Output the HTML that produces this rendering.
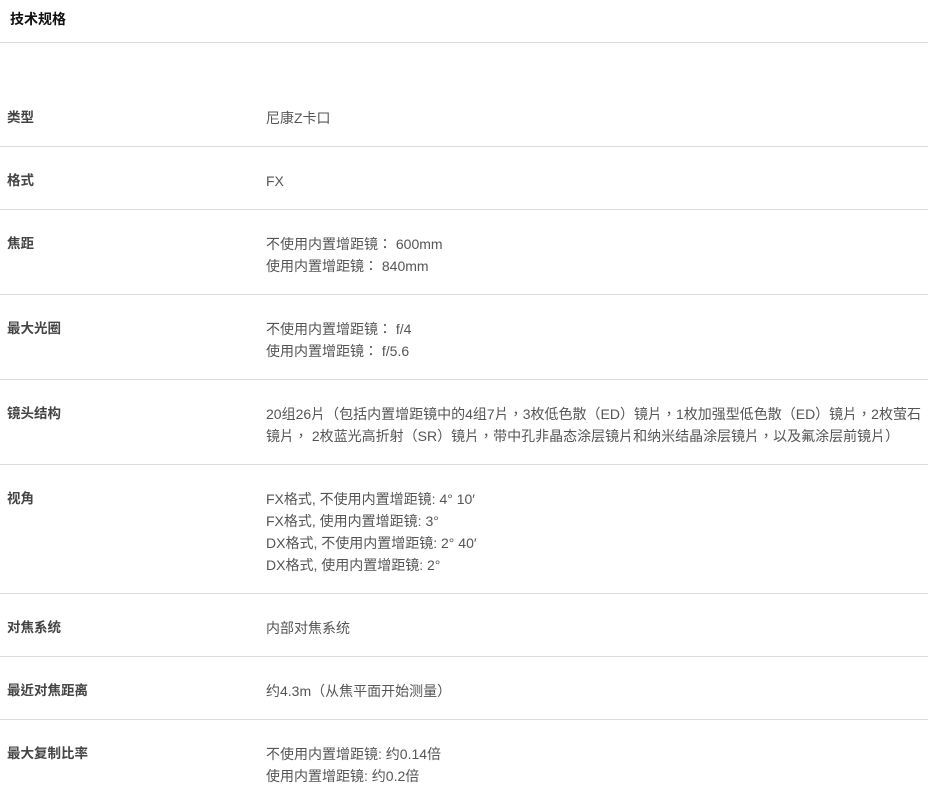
<!DOCTYPE html>
<html><head><meta charset="utf-8"><style>
body{margin:0;background:#fff;font-family:"Liberation Sans","Noto Sans CJK TC",sans-serif;width:928px;overflow:hidden}
.h{height:43px;border-bottom:1px solid #d9d9d9;box-sizing:border-box;font-size:14px;font-weight:bold;color:#111;padding:10px 0 0 10px;line-height:18px}
.sp{height:41px}
.r{display:flex;border-bottom:1px solid #dcdcdc;padding:23px 0 17px 0;font-size:14px;line-height:22px}
.l{width:259px;padding-left:7px;font-weight:bold;color:#444;font-size:13.5px}
.v{flex:1;color:#555;padding-right:4px}
</style></head><body>
<div class="h">技术规格</div>
<div class="sp"></div>
<div class="r"><div class="l">类型</div><div class="v">尼康Z卡口</div></div>
<div class="r"><div class="l">格式</div><div class="v">FX</div></div>
<div class="r"><div class="l">焦距</div><div class="v">不使用内置增距镜： 600mm<br>使用内置增距镜： 840mm</div></div>
<div class="r"><div class="l">最大光圈</div><div class="v">不使用内置增距镜： f/4<br>使用内置增距镜： f/5.6</div></div>
<div class="r"><div class="l">镜头结构</div><div class="v">20组26片（包括内置增距镜中的4组7片，3枚低色散（ED）镜片，1枚加强型低色散（ED）镜片，2枚萤石镜片， 2枚蓝光高折射（SR）镜片，带中孔非晶态涂层镜片和纳米结晶涂层镜片，以及氟涂层前镜片）</div></div>
<div class="r"><div class="l">视角</div><div class="v">FX格式, 不使用内置增距镜: 4° 10′<br>FX格式, 使用内置增距镜: 3°<br>DX格式, 不使用内置增距镜: 2° 40′<br>DX格式, 使用内置增距镜: 2°</div></div>
<div class="r"><div class="l">对焦系统</div><div class="v">内部对焦系统</div></div>
<div class="r"><div class="l">最近对焦距离</div><div class="v">约4.3m（从焦平面开始测量）</div></div>
<div class="r" style="border:none"><div class="l">最大复制比率</div><div class="v">不使用内置增距镜: 约0.14倍<br>使用内置增距镜: 约0.2倍</div></div>
</body></html>
